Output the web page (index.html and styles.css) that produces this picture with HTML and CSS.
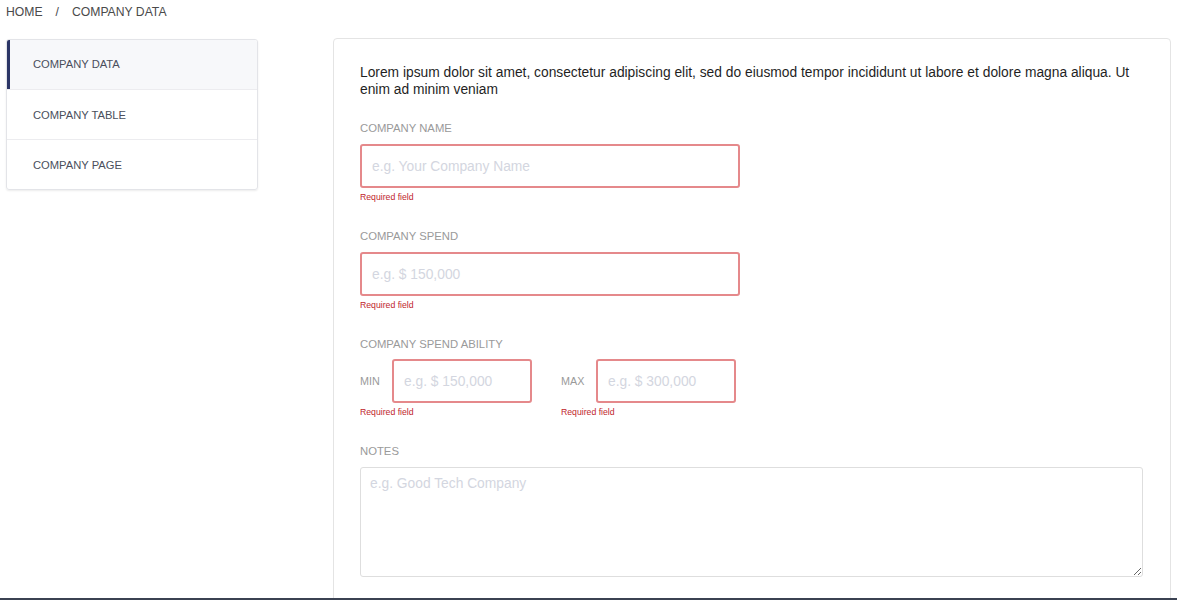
FILE: index.html
```html
<!DOCTYPE html>
<html>
<head>
<meta charset="utf-8">
<link rel="stylesheet" href="styles.css">
</head>
<body>
<div class="page">
  <nav class="breadcrumb"><span>HOME</span><span class="sep">/</span><span>COMPANY DATA</span></nav>
  <div class="layout">
    <aside class="sidebar">
      <a class="side-item active">COMPANY DATA</a>
      <a class="side-item">COMPANY TABLE</a>
      <a class="side-item">COMPANY PAGE</a>
    </aside>
    <main class="card">
      <p class="intro">Lorem ipsum dolor sit amet, consectetur adipiscing elit, sed do eiusmod tempor incididunt ut labore et dolore magna aliqua. Ut enim ad minim veniam</p>
      <div class="field">
        <label class="label">COMPANY NAME</label>
        <input class="input error wide" placeholder="e.g. Your Company Name">
        <div class="err">Required field</div>
      </div>
      <div class="field">
        <label class="label">COMPANY SPEND</label>
        <input class="input error wide" placeholder="e.g. $ 150,000">
        <div class="err">Required field</div>
      </div>
      <div class="field">
        <label class="label">COMPANY SPEND ABILITY</label>
        <div class="range">
          <div class="range-group">
            <div class="range-row"><span class="mini">MIN</span><input class="input error small" placeholder="e.g. $ 150,000"></div>
            <div class="err">Required field</div>
          </div>
          <div class="range-group">
            <div class="range-row"><span class="mini">MAX</span><input class="input error small" placeholder="e.g. $ 300,000"></div>
            <div class="err">Required field</div>
          </div>
        </div>
      </div>
      <div class="field notes">
        <label class="label">NOTES</label>
        <textarea class="textarea" placeholder="e.g. Good Tech Company"></textarea>
      </div>
    </main>
  </div>
</div>
</body>
</html>
```
FILE: styles.css
```css
html, body {
  margin: 0;
  padding: 0;
  background: #fff;
  font-family: "Liberation Sans", Arial, sans-serif;
}
.page {
  height: 598px;
  overflow: hidden;
  border-bottom: 2px solid #3b4252;
}
.breadcrumb {
  display: flex;
  gap: 13px;
  padding: 5px 6px 0 6px;
  height: 38px;
  box-sizing: border-box;
  font-size: 12.2px;
  line-height: 15px;
  color: #4a4a4a;
}
.layout {
  display: flex;
  align-items: flex-start;
  gap: 75px;
  padding: 0 7px 0 6px;
}
.sidebar {
  margin-top: 1px;
  width: 252px;
  box-sizing: border-box;
  flex: none;
  border: 1px solid #e3e4e8;
  border-radius: 3px;
  box-shadow: 0 1px 2px rgba(0,0,0,0.08);
  display: flex;
  flex-direction: column;
  overflow: hidden;
}
.side-item {
  display: block;
  height: 50px;
  line-height: 50px;
  padding-left: 26px;
  font-size: 11.2px;
  color: #4a4f5c;
  border-top: 1px solid #ececef;
  box-sizing: border-box;
}
.side-item:first-child { border-top: none; height: 49px; line-height: 49px; }
.side-item.active {
  background: #f7f8fa;
  border-left: 3px solid #2c3566;
  padding-left: 23px;
}
.card {
  flex: 1;
  border: 1px solid #e4e4e4;
  border-radius: 4px;
  padding: 25px 27px 40px 26px;
  min-height: 600px;
}
.intro {
  margin: 0 0 23px 0;
  font-size: 13.8px;
  line-height: 17px;
  color: #1f1f1f;
}
.field {
  display: flex;
  flex-direction: column;
  align-items: flex-start;
  margin-bottom: 27px;
}
.label {
  font-size: 11.3px;
  line-height: 14px;
  color: #9a9a9a;
  margin-bottom: 9px;
}
.input {
  box-sizing: border-box;
  height: 44px;
  border: 2px solid #e5898b;
  border-radius: 3px;
  padding: 0 10px;
  font-family: "Liberation Sans", Arial, sans-serif;
  font-size: 13.8px;
  color: #333;
  outline: none;
}
.input::placeholder, .textarea::placeholder { color: #d3d6e0; }
.wide { width: 380px; }
.small { width: 140px; }
.err {
  margin-top: 4px;
  font-size: 8.7px;
  line-height: 10px;
  color: #c0262d;
}
.range {
  display: flex;
  gap: 29px;
  margin-top: -1px;
}
.range-group {
  display: flex;
  flex-direction: column;
}
.range-row {
  display: flex;
  align-items: center;
  gap: 12px;
}
.mini {
  font-size: 10.8px;
  color: #9a9a9a;
  width: 20px;
}
.range-group:nth-child(2) .mini { width: 23px; }
.notes { margin-top: 9px; }
.notes .label { margin-bottom: 9px; }
.textarea {
  box-sizing: border-box;
  width: 783px;
  height: 110px;
  border: 1px solid #dedede;
  border-radius: 3px;
  padding: 8px 9px;
  font-family: "Liberation Sans", Arial, sans-serif;
  font-size: 13.8px;
  resize: vertical;
  outline: none;
}
```
